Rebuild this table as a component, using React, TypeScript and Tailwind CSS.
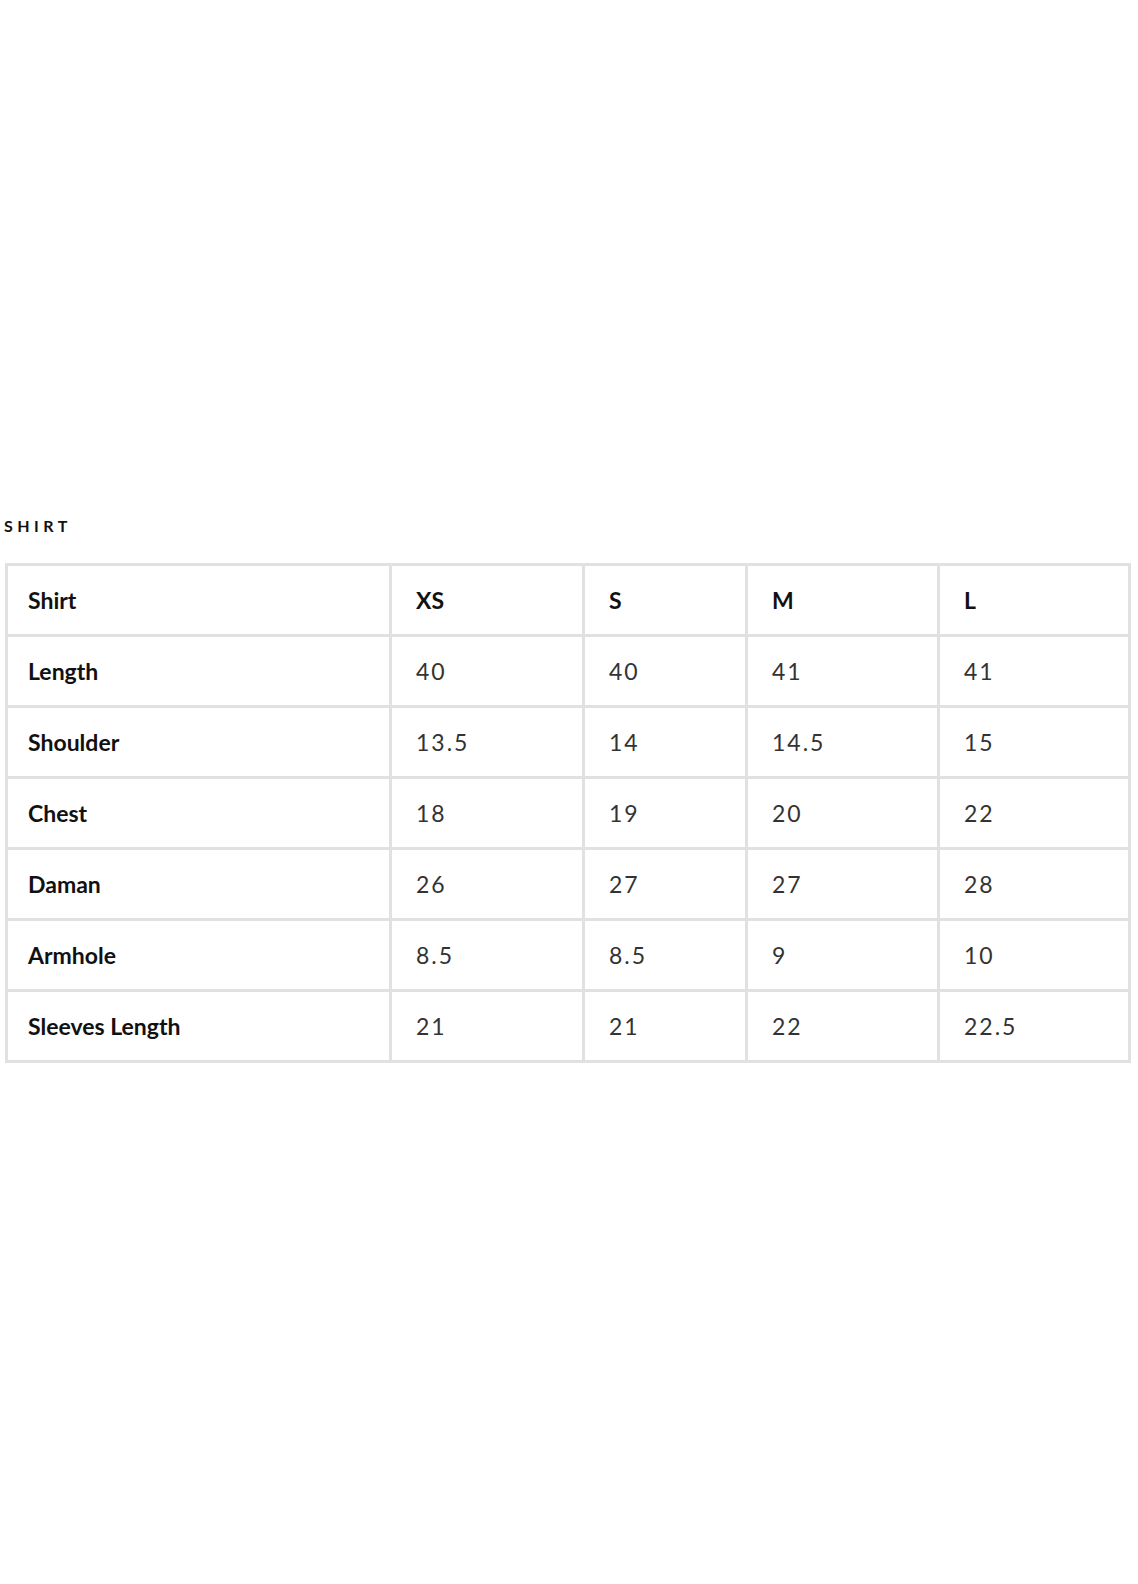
import React from "react";

const sizes = ["XS", "S", "M", "L"];

const rows: [string, string[]][] = [
  ["Length", ["40", "40", "41", "41"]],
  ["Shoulder", ["13.5", "14", "14.5", "15"]],
  ["Chest", ["18", "19", "20", "22"]],
  ["Daman", ["26", "27", "27", "28"]],
  ["Armhole", ["8.5", "8.5", "9", "10"]],
  ["Sleeves Length", ["21", "21", "22", "22.5"]],
];

const Cell: React.FC<{ bold?: boolean; first?: boolean; children: React.ReactNode }> = ({
  bold,
  first,
  children,
}) => (
  <div
    className={
      "bg-white h-[68px] flex items-center " +
      (first ? "pl-[20px] " : "pl-[24px] ") +
      (bold
        ? "font-bold text-[23px] text-[#111]"
        : "font-normal text-[23px] tracking-[2px] text-[#333]")
    }
  >
    {children}
  </div>
);

export default function App() {
  return (
    <div
      className="w-[1138px] h-[1584px] bg-white"
      style={{ fontFamily: "Lato, 'Noto Sans', sans-serif" }}
    >
      <div className="pt-[516px] pl-[4px]">
        {/* title */}
        <div className="text-[16px] leading-[20px] font-bold tracking-[4.5px] text-[#111]">
          SHIRT
        </div>

        {/* size chart */}
        <div className="mt-[27px] ml-[1px] w-[1126px] grid grid-cols-[381px_190px_160px_189px_188px] gap-[3px] p-[3px] bg-[#e1e1e1]">
          <Cell bold first>
            Shirt
          </Cell>
          {sizes.map((s) => (
            <Cell bold key={s}>
              {s}
            </Cell>
          ))}
          {rows.map(([label, vals]) => (
            <React.Fragment key={label}>
              <Cell bold first>
                {label}
              </Cell>
              {vals.map((v, i) => (
                <Cell key={i}>{v}</Cell>
              ))}
            </React.Fragment>
          ))}
        </div>
      </div>
    </div>
  );
}
